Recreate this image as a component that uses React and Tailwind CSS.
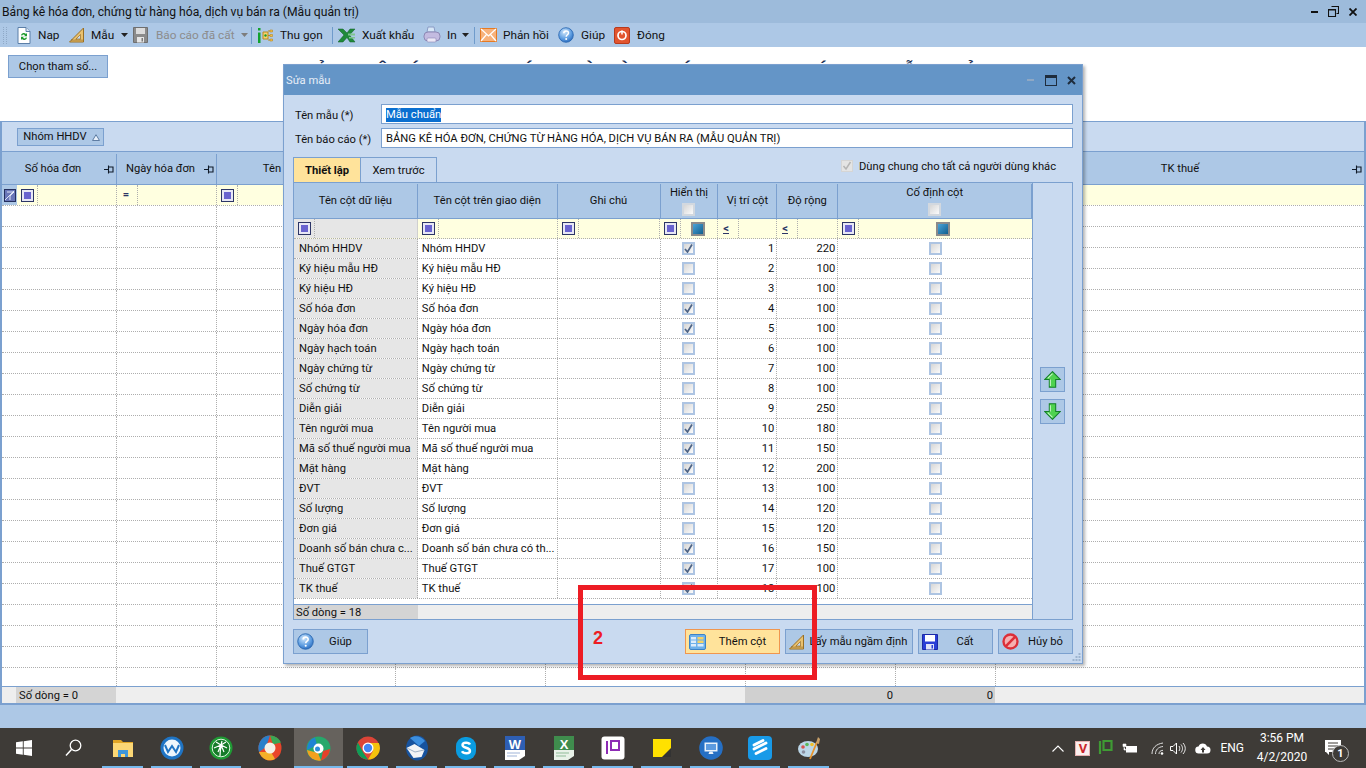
import React from "react";

const FONT = "font-['Roboto','Liberation_Sans',Arial,sans-serif]";
const BORDER = "border-[#7ba0cf]";

const IconDoc = () => (
  <svg width="14" height="17" viewBox="0 0 14 17"><path d="M1 .5h8l4 4v12H1z" fill="#fff" stroke="#5b7fa8"/><path d="M9 .5v4h4" fill="#dbe6f3" stroke="#5b7fa8"/><path d="M4 8a3 3 0 0 1 5-1l1-1v3.200H7l1-1a2 2 0 0 0-3 .6zM10 11a3 3 0 0 1-5 1l-1 1V9.800h3l-1 1a2 2 0 0 0 3-.6z" fill="#1e9a2e"/></svg>
);
const IconRuler = ({ s = 16 }) => (
  <svg width={s} height={s} viewBox="0 0 16 16"><path d="M14.500 1v14H.5z" fill="#e9c16f" stroke="#9a6f22"/><path d="M11.500 7.500v4.500H7z" fill="#c9daf0" stroke="#9a6f22" strokeWidth=".7"/><path d="M3 14v-2M5 14v-1.500M7 14v-2M9 14v-1.500M11 14v-2M13 14v-1.500" stroke="#7b5512" strokeWidth=".7"/></svg>
);
const IconFloppyGray = () => (
  <svg width="15" height="16" viewBox="0 0 15 16"><path d="M.5.5h14v15H.5z" fill="#8b8b8b" stroke="#6f6f6f"/><path d="M3 1h9v6H3z" fill="#dcdcdc"/><path d="M4 10h7v5.500H4z" fill="#e6e6e6"/><path d="M8.500 11h1.500v3.500H8.500z" fill="#7a7a7a"/></svg>
);
const IconTree = () => (
  <svg width="16" height="17" viewBox="0 0 16 17"><path d="M1 1h2.500v2.500H1zM1 5.500h2.500V16H1z" fill="#12a12e"/><path d="M6 5h5v7H6z" fill="#f7d36f" stroke="#b98a1e"/><path d="M11 4h2M11 8.500h2M11 13h2" stroke="#b98a1e"/><path d="M13 3h2.500v2H13zM13 7.500h2.500v2H13zM13 12h2.500v2H13z" fill="#f3c04d" stroke="#b98a1e" strokeWidth=".6"/><circle cx="8.500" cy="8.500" r="1.200" fill="#1a9a2c"/></svg>
);
const IconExcel = () => (
  <svg width="18" height="15" viewBox="0 0 18 15"><path d="M0 1h5l4 4 3-4h5l-5.500 6L17 14h-5L9 9.500 5 14H0l6-7z" fill="#1f8a3a" stroke="#105c24" strokeWidth=".5"/><path d="M10 5.500h7v2h-7zM11 9h6v1.500h-6z" fill="#7fc58f"/></svg>
);
const IconPrinter = () => (
  <svg width="18" height="18" viewBox="0 0 18 18"><path d="M5 1h6l1 5H4z" fill="#d7e7f7" stroke="#8b9cc5"/><rect x="1" y="6" width="16" height="9" rx="4" fill="#c3bbe0" stroke="#8d88b5"/><rect x="4" y="12" width="9" height="4" rx="1" fill="#ece8f6" stroke="#8b84b5" strokeWidth=".6"/></svg>
);
const IconMail = () => (
  <svg width="17" height="14" viewBox="0 0 17 14"><path d="M.5.5h16v13H.5z" fill="#f7b27c" stroke="#e67a22"/><path d="M1 1l7.500 7L16 1M1 13l5.500-6.500M16 13l-5.500-6.500" fill="none" stroke="#fff" strokeWidth="1.200"/></svg>
);
const IconHelp = ({ s = 16 }) => (
  <svg width={s} height={s} viewBox="0 0 16 16"><defs><radialGradient id="hp" cx=".4" cy=".3" r=".8"><stop offset="0" stopColor="#cfe6fb"/><stop offset=".6" stopColor="#5b9be0"/><stop offset="1" stopColor="#1f5fb5"/></radialGradient></defs><circle cx="8" cy="8" r="7.300" fill="url(#hp)" stroke="#2563ae" strokeWidth=".8"/><path d="M5.800 6.200c0-3 4.700-3 4.700-.2 0 1.800-2.300 1.700-2.300 3.700" fill="none" stroke="#fff" strokeWidth="1.500"/><circle cx="8.200" cy="12" r="1" fill="#fff"/></svg>
);
const IconPower = () => (
  <svg width="16" height="17" viewBox="0 0 16 17"><rect x=".5" y=".5" width="15" height="16" rx="1.500" fill="#e2552f" stroke="#b73a1d"/><circle cx="8" cy="8.500" r="4" fill="none" stroke="#fff" strokeWidth="1.700"/><path d="M8 3.500v4" stroke="#fff" strokeWidth="1.500"/></svg>
);
const IconColumns = () => (
  <svg width="17" height="16" viewBox="0 0 17 16"><rect x=".5" y=".5" width="16" height="15" rx="1.500" fill="#6db0ea" stroke="#3d83c6"/><path d="M2 3h5v2.500H2zM2 6.500h5V9H2zM2 10h5v2.500H2zM8.500 10h6v2.500h-6z" fill="#dcecfa"/><path d="M8.500 3h6v2.500h-6z" fill="#f5d266"/><path d="M8.500 6.500h6V9h-6z" fill="#f5d266"/></svg>
);
const IconSave = () => (
  <svg width="16" height="16" viewBox="0 0 16 16"><path d="M.5.5h15v15H.5z" fill="#2a3fd6" stroke="#1c2aa6"/><path d="M3 1h10v6.500H3z" fill="#fff"/><path d="M4 10h8v5.500H4z" fill="#dfe3f7"/><path d="M9.500 11h1.500v3.500H9.500z" fill="#2a3fd6"/></svg>
);
const IconCancel = () => (
  <svg width="17" height="17" viewBox="0 0 16 16"><circle cx="8" cy="8" r="6.600" fill="#f6b0b0" stroke="#dc2f38" strokeWidth="2.200"/><path d="M3.500 12.500l9-9" stroke="#dc2f38" strokeWidth="2.400"/></svg>
);
const Arrow = ({ down }) => (
  <svg width="17" height="17" viewBox="0 0 16 16" style={{ transform: down ? "scaleY(-1)" : undefined }}><path d="M8 .6L15.200 8H11v7.300H5V8H.8z" fill="#4fd24f" stroke="#14802a"/><path d="M8 2.500L3.500 7M6 8v6" fill="none" stroke="#c6f5c6"/></svg>
);
const Pin = () => (
  <svg width="10" height="9" viewBox="0 0 10 9"><path d="M0 4.500h4M4.500 .5v8M4.500 2h4.500v5H4.500" fill="none" stroke="#101a28" strokeWidth="1.100"/></svg>
);
const Caret = ({ c = "#222" }) => (
  <svg width="7" height="4" viewBox="0 0 7 4"><path d="M0 0h7L3.500 4z" fill={c} /></svg>
);

const OpBox = () => (
  <span className="inline-flex h-[13px] w-[13px] shrink-0 items-center justify-center border border-[#2c3566] bg-[#e8e8f5]">
    <span className="h-[7px] w-[7px] bg-[#6a64cf]" />
  </span>
);
const FilterCheck = () => (
  <span className="inline-block h-[14px] w-[14px] border-2 border-[#8b8b8b] bg-gradient-to-br from-[#4aa4d8] to-[#0f5f8f]" />
);
const Check = ({ on, head }) => (
  <span className={`inline-flex h-[13px] w-[13px] items-center justify-center border-2 ${head ? "border-[#d2d8df]" : "border-[#adc4e2]"} bg-gradient-to-br from-[#d6d6d6] to-[#fbfbfb]`}>
    {on && <svg width="9" height="9" viewBox="0 0 9 9"><path d="M1 5l2.500 3L8 .5" fill="none" stroke="#4d6385" strokeWidth="1.700"/></svg>}
  </span>
);

function Tool({ icon, label, arrow, disabled, cls = "", lab = "", gap = "ml-[8px]" }) {
  return (
    <div className={`flex items-center ${cls}`}>
      {icon}
      {label && <span className={`${gap} ${lab} whitespace-nowrap ${disabled ? "text-[#8c8c8c]" : "text-[#111]"}`}>{label}</span>}
      {arrow && <span className="ml-[6px] flex"><Caret c={disabled ? "#7d7d7d" : "#222"} /></span>}
    </div>
  );
}
const Sep = ({ cls }) => <span className={`h-[17px] w-px bg-[#6f9bcb] ${cls}`} />;

const MAIN = [
  ["Số hóa đơn", "w-[115px]", true],
  ["Ngày hóa đơn", "w-[100px]", true],
  ["Tên người mua", "w-[179px]", true],
  ["", "w-[150px]", false],
  ["", "w-[200px]", false],
  ["", "w-[150px]", false],
  ["", "w-[100px]", false],
];

const cols = ["w-[124px]", "w-[140px]", "w-[103px]", "w-[58px]", "w-[59px]", "w-[61px]", "w-[194px]"];
const rows = [
  ["Nhóm HHDV", "Nhóm HHDV", 1, 1, 220],
  ["Ký hiệu mẫu HĐ", "Ký hiệu mẫu HĐ", 0, 2, 100],
  ["Ký hiệu HĐ", "Ký hiệu HĐ", 0, 3, 100],
  ["Số hóa đơn", "Số hóa đơn", 1, 4, 100],
  ["Ngày hóa đơn", "Ngày hóa đơn", 1, 5, 100],
  ["Ngày hạch toán", "Ngày hạch toán", 0, 6, 100],
  ["Ngày chứng từ", "Ngày chứng từ", 0, 7, 100],
  ["Số chứng từ", "Số chứng từ", 0, 8, 100],
  ["Diễn giải", "Diễn giải", 0, 9, 250],
  ["Tên người mua", "Tên người mua", 1, 10, 180],
  ["Mã số thuế người mua", "Mã số thuế người mua", 1, 11, 150],
  ["Mặt hàng", "Mặt hàng", 1, 12, 200],
  ["ĐVT", "ĐVT", 0, 13, 100],
  ["Số lượng", "Số lượng", 0, 14, 120],
  ["Đơn giá", "Đơn giá", 0, 15, 120],
  ["Doanh số bán chưa c...", "Doanh số bán chưa có th...", 1, 16, 150],
  ["Thuế GTGT", "Thuế GTGT", 1, 17, 100],
  ["TK thuế", "TK thuế", 1, 18, 100],
];

const DOT = "border-dotted border-[#aeaeae]";

function MainRow({ children }) {
  return <div className={`flex h-[21px] shrink-0 border-b ${DOT}`}>{children}</div>;
}
const OpCell = ({ children }) => (
  <div className={`flex h-full w-[21px] shrink-0 items-center border-r ${DOT} pl-[4px]`}>{children}</div>
);

function DlgButton({ icon, label, cls, hot, textCls = "flex-1 text-center" }) {
  return (
    <div className={`flex h-[25px] items-center border pl-[3px] ${hot ? "border-[#f0964e] bg-[#ffe39b]" : `${BORDER} bg-[#adc8e6]`} ${cls}`}>
      {icon}
      <span className={`whitespace-nowrap text-[#111] ${textCls}`}>{label}</span>
    </div>
  );
}

const Windows = () => (
  <svg width="16" height="16" viewBox="0 0 16 16"><path d="M0 2.300l6.800-1v6.300H0zM7.700 1.200L16 0v7.600H7.700zM0 8.400h6.800v6.300L0 13.700zM7.700 8.400H16V16l-8.300-1.200z" fill="#fff"/></svg>
);
const Search = () => (
  <svg width="17" height="18" viewBox="0 0 17 18"><circle cx="10.500" cy="6.500" r="5.300" fill="none" stroke="#fff" strokeWidth="1.300"/><path d="M6.500 10.500L1 16.500" stroke="#fff" strokeWidth="1.500"/></svg>
);
const Folder = () => (
  <svg width="22" height="22" viewBox="0 0 22 22"><path d="M1 3h8l2 2h10v3H1z" fill="#e0a526"/><path d="M1 6h20v14H1z" fill="#fbd775"/><path d="M6 13h10v7h-3v-3H9v3H6z" fill="#3d97dc"/></svg>
);
const Mobi = () => (
  <svg width="24" height="24" viewBox="0 0 24 24"><circle cx="12" cy="12" r="11.500" fill="#1f74c4"/><circle cx="12" cy="12" r="8.500" fill="#eef6fc"/><path d="M5 9l3 7 4-6 4 6 3-7" fill="none" stroke="#1f74c4" strokeWidth="2"/></svg>
);
const Palm = () => (
  <svg width="24" height="24" viewBox="0 0 24 24"><circle cx="12" cy="12" r="11.500" fill="#1f9a34"/><circle cx="12" cy="12" r="8.800" fill="#157a28" stroke="#dff5e0"/><path d="M11 20c0-5 .5-8 1.500-11M12 9L5 12M12 9l-5-3M12 9l1-4M12 9l5-3M12 9l6 3M12 9l3 7M12 9l-3 7" stroke="#fff" strokeWidth="1.200" fill="none"/></svg>
);
const Orb = () => (
  <svg width="24" height="26" viewBox="0 0 24 26"><ellipse cx="12" cy="13" rx="11.500" ry="12.500" fill="#e8452a"/><path d="M12 .5A11.500 12.500 0 0 0 1 17l7-5z" fill="#2a7fc9"/><path d="M1 17a11.500 12.500 0 0 0 16 7l-4-7z" fill="#f4b02a"/><path d="M12 .5c5 0 9 3 11 7l-8 2z" fill="#3aa655"/><circle cx="12" cy="13" r="5.500" fill="#f4f1e8"/></svg>
);
const Coc = () => (
  <svg width="25" height="25" viewBox="0 0 25 25"><circle cx="12.500" cy="12.500" r="12" fill="#27a86b"/><path d="M1 14A12 12 0 0 0 15 24.500L12 17z" fill="#f2a11f"/><path d="M1 14C1 8 4 3 9 1.500L11 9z" fill="#1e84d4"/><path d="M15 24.500C20 23 24 18 24 13l-7 2z" fill="#e5402a"/><circle cx="12.500" cy="12.500" r="5" fill="#fff"/><circle cx="11.500" cy="13" r="2.500" fill="#2c8edb"/></svg>
);
const Chrome = () => (
  <svg width="24" height="24" viewBox="0 0 24 24"><circle cx="12" cy="12" r="11.500" fill="#db4437"/><path d="M1.800 6.500L7.500 17l4.500 6.500A11.500 11.500 0 0 1 1.800 6.500z" fill="#0f9d58"/><path d="M12 7h10.800A11.500 11.500 0 0 1 12 23.500L17 15z" fill="#f4c20d"/><circle cx="12" cy="12" r="5.500" fill="#fff"/><circle cx="12" cy="12" r="4.200" fill="#4285f4"/></svg>
);
const Thunder = () => (
  <svg width="24" height="26" viewBox="0 0 24 26"><ellipse cx="12" cy="13" rx="11" ry="12.500" fill="#17539e"/><path d="M5 3c5-3 11-2 15 3l-6 5z" fill="#3c8fdf"/><path d="M1.500 13l8-4 10 6-3 7-8 1z" fill="#f2f4f6"/><path d="M2 13l8 4 9-2" fill="none" stroke="#9fb2c6"/></svg>
);
const Skype = () => (
  <svg width="22" height="25" viewBox="0 0 22 25"><rect x="1" y="1" width="20" height="23" rx="9" fill="#0a9ce0"/><path d="M15 8.500c-1-2.500-7.500-2.500-7.500.5 0 3.500 7.500 2 7.500 6 0 3-6.500 3-8 .2" fill="none" stroke="#fff" strokeWidth="2.400"/></svg>
);
const Word = () => (
  <svg width="22" height="26" viewBox="0 0 22 26"><path d="M1 1h20v20l-6 4H1z" fill="#fff"/><path d="M1 1h20v14H1z" fill="#2e5fb4"/><text x="11" y="14" textAnchor="middle" fontSize="13" fontWeight="700" fill="#fff" fontFamily="Liberation Sans">W</text><path d="M3 18h13M3 21h10" stroke="#9fb4d8"/></svg>
);
const Excel = () => (
  <svg width="22" height="26" viewBox="0 0 22 26"><path d="M1 1h20v20l-6 4H1z" fill="#e8f1e8"/><path d="M1 1h20v14H1z" fill="#3f8c4d"/><text x="11" y="14" textAnchor="middle" fontSize="13" fontWeight="700" fill="#fff" fontFamily="Liberation Sans">X</text><path d="M3 18h13M3 21h10" stroke="#8fbb98"/></svg>
);
const IP = () => (
  <svg width="24" height="24" viewBox="0 0 24 24"><rect x=".5" y=".5" width="23" height="23" rx="3" fill="#fff"/><path d="M6 5v13M10 5v9h8V5z" fill="none" stroke="#8d2bb5" strokeWidth="2"/></svg>
);
const Sticky = () => (
  <svg width="18" height="18" viewBox="0 0 18 18"><path d="M0 0h18v18H0z" fill="#ffe100"/><path d="M18 9v9H9z" fill="#333"/></svg>
);
const Monitor = () => (
  <svg width="24" height="24" viewBox="0 0 24 24"><circle cx="12" cy="12" r="11.800" fill="#256fc4"/><path d="M5.500 6.500h13v9h-13z" fill="#eaf2fb"/><path d="M7 8h10v6H7z" fill="#5d9be0"/><path d="M9.500 18h5l-1-2.500h-3z" fill="#eaf2fb"/></svg>
);
const Tile = () => (
  <svg width="24" height="24" viewBox="0 0 24 24"><rect width="24" height="24" rx="4" fill="#189ae8"/><path d="M6 9l9-4.500M6 13l12-6M8 17.500l10-5" stroke="#fff" strokeWidth="2.800" strokeLinecap="round"/></svg>
);
const Palette = () => (
  <svg width="24" height="24" viewBox="0 0 24 24"><ellipse cx="11" cy="13" rx="10" ry="8" fill="#bcd7e8"/><circle cx="6" cy="11" r="1.800" fill="#d9534f"/><circle cx="10" cy="8.500" r="1.800" fill="#5cb85c"/><circle cx="15" cy="8.500" r="1.800" fill="#f0c02a"/><circle cx="6.500" cy="16" r="1.800" fill="#8a8fa0"/><path d="M13 23L20 6" stroke="#e8932a" strokeWidth="1.800"/><path d="M19 7l2-6 2 2-1 5z" fill="#c8a068"/></svg>
);

const apps = [
  [Folder, 1], [Mobi, 1], [Palm, 1], [Orb, 0], [Coc, 2], [Chrome, 1], [Thunder, 1], [Skype, 1], [Word, 1], [Excel, 1], [IP, 1], [Sticky, 1], [Monitor, 1], [Tile, 1], [Palette, 1],
];

export default function App() {
  return (
    <div className={`relative flex h-[768px] w-[1366px] flex-col overflow-hidden bg-white text-[11.2px] leading-[14px] text-[#111] ${FONT}`}>
      {/* window title */}
      <div className="flex h-[23px] shrink-0 items-center bg-[#9dbbdb] pl-[2px] pr-[4px]">
        <span className="flex-1 text-[12.15px] text-[#111]">Bảng kê hóa đơn, chứng từ hàng hóa, dịch vụ bán ra (Mẫu quản trị)</span>
        <div className="mr-[5px] flex items-center">
          <span className="mr-[10px] h-[2px] w-[7px] bg-[#111]" />
          <svg width="11" height="11" viewBox="0 0 11 11" className="mr-[10px]"><path d="M3.500.5h7v7h-2M.5 3.500h7v7h-7zM.5 4h7" fill="none" stroke="#111" strokeWidth="1.100"/></svg>
          <svg width="8" height="8" viewBox="0 0 8 8"><path d="M.5.5l7 7M7.500.5l-7 7" stroke="#111" strokeWidth="1.800"/></svg>
        </div>
      </div>
      {/* toolbar */}
      <div className="flex h-[24px] shrink-0 items-center bg-[#adc8e6] text-[11.8px]">
        <span className="ml-[3px] h-[17px] w-[4px] border-x border-dotted border-[#8fa9c7]" />
        <Tool cls="ml-[10px]" icon={<IconDoc />} label="Nap" gap="ml-[7px]" lab="w-[22px]" />
        <Tool cls="ml-[9px]" icon={<IconRuler />} label="Mẫu" arrow gap="ml-[6px]" lab="w-[24px]" />
        <Tool cls="ml-[5px]" icon={<IconFloppyGray />} label="Báo cáo đã cất" arrow disabled lab="w-[79px]" />
        <Sep cls="ml-[3px]" />
        <Tool cls="ml-[5px]" icon={<IconTree />} label="Thu gọn" gap="ml-[7px]" lab="w-[44px]" />
        <Sep cls="ml-[8px]" />
        <Tool cls="ml-[5px]" icon={<IconExcel />} label="Xuất khẩu" gap="ml-[6px]" lab="w-[52px]" />
        <Tool cls="ml-[9px]" icon={<IconPrinter />} label="In" arrow gap="ml-[6px]" lab="w-[9px]" />
        <Sep cls="ml-[5px]" />
        <Tool cls="ml-[5px]" icon={<IconMail />} label="Phản hồi" gap="ml-[6px]" lab="w-[47px]" />
        <Tool cls="ml-[8px]" icon={<IconHelp />} label="Giúp" gap="ml-[7px]" lab="w-[25px]" />
        <Tool cls="ml-[8px]" icon={<IconPower />} label="Đóng" gap="ml-[7px]" />
      </div>
      {/* parameter area */}
      <div className="flex h-[74px] shrink-0 items-start bg-white">
        <div className={`ml-[8px] mt-[8px] flex h-[23px] w-[100px] items-center justify-center border ${BORDER} bg-[#adc8e6]`}>Chọn tham số...</div>
        <div className="ml-[193px] mt-[13px] whitespace-nowrap font-['Liberation_Sans',Arial,sans-serif] text-[19px] font-bold leading-[22px] text-[#1b2f55]">BẢNG KÊ HÓA ĐƠN, CHỨNG TỪ HÀNG HÓA, DỊCH VỤ BÁN RA (MẪU QUẢN TRỊ)</div>
      </div>
      {/* main grid */}
      <div className={`flex flex-1 flex-col border-x-2 border-t ${BORDER} min-h-0`}>
        <div className={`flex h-[30px] shrink-0 items-center border-b ${BORDER} bg-[#c9daf0] pl-[15px]`}>
          <div className={`flex h-[18px] w-[87px] items-center justify-center gap-[5px] border ${BORDER} bg-[#adc8e6] pl-[2px] pt-[1px]`}>
            Nhóm HHDV
            <svg width="8" height="7" viewBox="0 0 8 7"><path d="M4 .7L7.500 6.500H.5z" fill="#e9f1fb" stroke="#5f7da3"/></svg>
          </div>
        </div>
        <div className={`flex h-[33px] shrink-0 border-b ${BORDER} bg-[#adc8e6] pt-[2px]`}>
          {MAIN.map(([t, w, pin], i) => (
            <div key={i} className={`relative flex items-center justify-center border-r ${BORDER} ${w}`}>
              <span className={pin ? "pr-[12px]" : ""}>{t}</span>
              {pin && <span className="absolute right-[2px] top-[11px] flex"><Pin /></span>}
            </div>
          ))}
          <div className="relative flex flex-1 items-center justify-center">
            TK thuế
            <span className="absolute right-[2px] top-[11px] flex"><Pin /></span>
          </div>
        </div>
        <div className="flex min-h-0 flex-1 flex-col overflow-hidden">
          <MainRow>
            <div className="flex w-[15px] items-center justify-center bg-[#adc8e6]">
              <svg width="12" height="13" viewBox="0 0 12 13"><rect x=".5" y=".5" width="11" height="12" fill="#6a77b8" stroke="#25305f"/><path d="M1 11L10 2M3 3h7L6 7v4" fill="none" stroke="#e9eefc" strokeWidth=".9"/></svg>
            </div>
            <div className="flex flex-1 bg-[#ffffe0]">
              <div className={`flex w-[100px] items-center border-r ${DOT}`}><OpCell><OpBox /></OpCell></div>
              <div className={`flex w-[100px] items-center border-r ${DOT}`}>
                <OpCell><span className="w-[10px] text-center font-bold leading-none text-[#2c3566]">=</span></OpCell>
              </div>
              <div className="flex w-[179px] items-center"><OpCell><OpBox /></OpCell></div>
            </div>
          </MainRow>
          {Array.from({ length: 23 }).map((_, r) => (
            <MainRow key={r}>
              {MAIN.map(([, w], i) => <div key={i} className={`border-r ${DOT} ${w}`} />)}
              <div className="flex-1" />
            </MainRow>
          ))}
        </div>
        <div className={`flex h-[19px] shrink-0 border-y-2 ${BORDER} border-t bg-[#eeeeee]`}>
          <div className="w-[14px]" />
          <div className="flex w-[100px] items-center bg-[#d4d4d4] pl-[3px] pt-[1px]">Số dòng = 0</div>
          <div className="w-[629px]" />
          <div className="flex w-[150px] items-center justify-end bg-[#d0d0d0] pr-[2px] pt-[1px]">0</div>
          <div className="flex w-[100px] items-center justify-end bg-[#d0d0d0] pr-[2px] pt-[1px]">0</div>
        </div>
      </div>
      <div className="h-[23px] shrink-0 bg-[#adc8e6]" />
      {/* taskbar */}
      <div className="flex h-[40px] shrink-0 items-stretch bg-[#3e3b37] text-white">
        <div className="flex w-[48px] items-center justify-center"><Windows /></div>
        <div className="flex w-[50px] items-center justify-center"><Search /></div>
        {apps.map(([Ico, st], i) => (
          <div key={i} className={`relative flex w-[49px] items-center justify-center ${st === 2 ? "bg-[#66625d]" : ""}`}>
            <Ico />
            {st > 0 && <span className={`absolute bottom-0 h-[2px] bg-[#76b9ed] ${st === 2 ? "inset-x-0" : "inset-x-[4px]"}`} />}
          </div>
        ))}
        <div className="flex flex-1 items-center justify-end pr-[21px]">
          <svg width="12" height="7" viewBox="0 0 12 7" className="mr-[11px]"><path d="M.5 6.500L6 1l5.500 5.500" fill="none" stroke="#fff" strokeWidth="1.100"/></svg>
          <span className="mr-[8px] flex h-[15px] w-[15px] items-center justify-center border border-[#e6b0b0] bg-[#fbeeee] text-[13px] font-bold leading-none text-[#c9262c]">V</span>
          <svg width="15" height="16" viewBox="0 0 15 16" className="mr-[9px]"><path d="M2 1v13M5.500 1v9h8V1z" fill="none" stroke="#3f9a34" strokeWidth="2.200"/></svg>
          <svg width="16" height="10" viewBox="0 0 16 10" className="mr-[13px]"><path d="M4 3h11v6.500H4z" fill="#fff"/><path d="M1 1h3v2.500H1zM2 4v3h2" fill="#fff" stroke="#fff" strokeWidth=".6"/></svg>
          <svg width="13" height="13" viewBox="0 0 13 13" className="mr-[6px]"><path d="M1 12C1 6 5 2 12 1M4.500 12C4.500 8 7 5 12 4.500M8 12c0-2 1-3.500 4-3.700" fill="none" stroke="#ddd" strokeWidth="1"/><circle cx="11" cy="11.500" r="1.300" fill="#fff"/></svg>
          <svg width="16" height="13" viewBox="0 0 16 13" className="mr-[9px]"><path d="M.5 4.500h2.500l3.500-3.500v11L3 8.500H.5z" fill="none" stroke="#fff"/><path d="M9 4c1 1.500 1 3.500 0 5M11 2.500c2 2.500 2 5.500 0 8M13 1c3 3.500 3 7.500 0 11" fill="none" stroke="#fff" strokeWidth=".9"/></svg>
          <svg width="16" height="11" viewBox="0 0 16 11" className="mr-[9px]"><path d="M4 10.500a3.500 3.500 0 0 1-.5-7A4.500 4.500 0 0 1 12 3.500a3.500 3.500 0 0 1 0 7z" fill="#fff"/><path d="M8 4l-2.500 3h1.500v2.500h2V7h1.500z" fill="#3e3b37"/></svg>
          <span className="mr-[14px] text-[12px] text-white">ENG</span>
          <div className="mr-[19px] flex w-[48px] flex-col items-center text-[12px] leading-[19px] text-white">
            <span className="whitespace-nowrap">3:56 PM</span>
            <span className="whitespace-nowrap">4/2/2020</span>
          </div>
          <div className="relative mr-[4px] h-[16px] w-[16px]">
            <svg width="16" height="15" viewBox="0 0 16 15"><path d="M0 0h16v12H4v3l-3-3H0z" fill="#fff"/><path d="M3 3h10M3 6h10M3 9h10" stroke="#3e3b37"/></svg>
            <span className="absolute left-[7px] top-[5px] flex h-[17px] w-[17px] items-center justify-center rounded-full border border-[#bbb] bg-[#3e3b37] text-[11px] font-bold text-white">1</span>
          </div>
        </div>
      </div>

      {/* dialog window */}
      <div className={`absolute left-[283px] top-[64px] flex h-[600px] w-[800px] flex-col border ${BORDER} bg-[#c9daf0] shadow-[2px_2px_3px_rgba(0,0,0,0.3)]`}>
        <div className="flex h-[30px] shrink-0 items-center bg-[#6495c7] pl-[2px] pr-[6px]">
          <span className="flex-1 pt-[1px] text-[#e7eef7]">Sửa mẫu</span>
          <span className="mr-[11px] h-[2px] w-[7px] bg-[#8fa8c4]" />
          <span className="mr-[10px] h-[11px] w-[12px] border border-t-[3px] border-[#1e2c3d]" />
          <svg width="9" height="9" viewBox="0 0 9 9"><path d="M1 1l7 7M8 1L1 8" stroke="#1e2c3d" strokeWidth="2"/></svg>
        </div>
        <div className="flex flex-1 flex-col px-[9px] pt-[9px]">
          <div className="flex h-[20px] items-center">
            <span className="ml-[2px] w-[86px] pt-[4px]">Tên mẫu (*)</span>
            <div className={`flex h-[20px] flex-1 items-center border ${BORDER} bg-white pl-[4px] pt-[2px]`}><span className="bg-[#0a6fd0] text-white">Mẫu chuẩn</span></div>
          </div>
          <div className="mt-[4px] flex h-[20px] items-center">
            <span className="ml-[2px] w-[86px] pt-[3px]">Tên báo cáo (*)</span>
            <div className={`flex h-[20px] flex-1 items-center border ${BORDER} bg-white pl-[4px] pt-[2px]`}>BẢNG KÊ HÓA ĐƠN, CHỨNG TỪ HÀNG HÓA, DỊCH VỤ BÁN RA (MẪU QUẢN TRỊ)</div>
          </div>
          <div className="mt-[9px] flex h-[25px] items-end">
            <div className={`flex h-[25px] w-[68px] items-center justify-center border-x border-t ${BORDER} bg-[#ffe39b] pt-[1px] font-bold`}>Thiết lập</div>
            <div className={`flex h-[25px] w-[76px] items-center justify-center border-r border-t ${BORDER} pt-[1px]`}>Xem trước</div>
            <div className="flex h-[25px] flex-1 items-start justify-end pr-[17px] pt-[3px]">
              <span className="mr-[6px] flex h-[12px] w-[12px] items-center justify-center border border-[#d5d5d5] bg-[#e4e4e4]">
                <svg width="10" height="10" viewBox="0 0 10 10"><path d="M1.500 5l2.500 3L8.500 1" fill="none" stroke="#b5b5b5" strokeWidth="1.500"/></svg>
              </span>
              Dùng chung cho tất cả người dùng khác
            </div>
          </div>
          <div className={`flex h-[438px] border ${BORDER}`}>
            <div className="flex w-[738px] flex-col bg-white">
              <div className={`flex h-[36px] shrink-0 border-b ${BORDER} bg-[#adc8e6] pt-[1px]`}>
                {["Tên cột dữ liệu", "Tên cột trên giao diện", "Ghi chú", "Hiển thị", "Vị trí cột", "Độ rộng", "Cố định cột"].map((t, i) => (
                  <div key={t} className={`flex flex-col items-center justify-center border-r ${BORDER} ${cols[i]}`}>
                    <span>{t}</span>
                    {(i === 3 || i === 6) && <span className="mt-[3px] flex"><Check head /></span>}
                  </div>
                ))}
              </div>
              <div className={`flex h-[20px] shrink-0 border-b ${DOT} bg-[#ffffe0]`}>
                <div className={`flex items-center border-r border-[#cfcfcf] bg-[#e6e6e6] ${cols[0]}`}><OpCell><OpBox /></OpCell></div>
                <div className={`flex items-center border-r ${DOT} ${cols[1]}`}><OpCell><OpBox /></OpCell></div>
                <div className={`flex items-center border-r ${DOT} ${cols[2]}`}><OpCell><OpBox /></OpCell></div>
                <div className={`flex items-center justify-between border-r ${DOT} pr-[12px] ${cols[3]}`}><OpCell><OpBox /></OpCell><FilterCheck /></div>
                <div className={`flex items-center border-r ${DOT} ${cols[4]}`}><OpCell><span className="ml-[1px] border-b border-[#2c3566] font-bold leading-[9px] text-[#2c3566]">&lt;</span></OpCell></div>
                <div className={`flex items-center border-r ${DOT} ${cols[5]}`}><OpCell><span className="ml-[1px] border-b border-[#2c3566] font-bold leading-[9px] text-[#2c3566]">&lt;</span></OpCell></div>
                <div className={`flex items-center justify-between pr-[82px] ${cols[6]}`}><OpCell><OpBox /></OpCell><FilterCheck /></div>
              </div>
              <div className="flex-1 overflow-hidden">
                {rows.map((r) => (
                  <div key={r[0] + r[3]} className={`flex h-[20px] border-b ${DOT}`}>
                    <div className={`flex items-center whitespace-nowrap border-r ${DOT} bg-[#e6e6e6] pl-[5px] pt-[1px] ${cols[0]}`}>{r[0]}</div>
                    <div className={`flex items-center whitespace-nowrap border-r ${DOT} pl-[4px] pt-[1px] ${cols[1]}`}>{r[1]}</div>
                    <div className={`border-r ${DOT} ${cols[2]}`} />
                    <div className={`flex items-center justify-center border-r ${DOT} ${cols[3]}`}><Check on={!!r[2]} /></div>
                    <div className={`flex items-center justify-end border-r ${DOT} pr-[2px] pt-[1px] ${cols[4]}`}>{r[3]}</div>
                    <div className={`flex items-center justify-end border-r ${DOT} pr-[2px] pt-[1px] ${cols[5]}`}>{r[4]}</div>
                    <div className={`flex items-center justify-center ${cols[6]}`}><Check /></div>
                  </div>
                ))}
              </div>
              <div className={`flex h-[15px] shrink-0 border-t ${BORDER} bg-[#eeeeee]`}>
                <div className="flex w-[124px] items-center bg-[#d4d4d4] pl-[2px] pt-[1px]">Số dòng = 18</div>
              </div>
            </div>
            <div className={`flex flex-1 flex-col items-center border-l ${BORDER} pt-[184px]`}>
              <div className={`flex h-[25px] w-[25px] items-center justify-center border ${BORDER} bg-[#adc8e6]`}><Arrow /></div>
              <div className={`mt-[7px] flex h-[25px] w-[25px] items-center justify-center border ${BORDER} bg-[#adc8e6]`}><Arrow down /></div>
            </div>
          </div>
          <div className="mt-[9px] flex">
            <DlgButton cls="w-[75px]" icon={<IconHelp s={17} />} label="Giúp" />
            <DlgButton cls="ml-[317px] w-[95px]" hot icon={<IconColumns />} label="Thêm cột" />
            <DlgButton cls="ml-[5px] w-[128px]" icon={<IconRuler />} label="Lấy mẫu ngầm định" />
            <DlgButton cls="ml-[5px] w-[75px]" icon={<IconSave />} label="Cất" />
            <DlgButton cls="ml-[5px] w-[75px]" icon={<IconCancel />} label="Hủy bỏ" />
          </div>
        </div>
        <svg width="9" height="9" viewBox="0 0 9 9" className="absolute bottom-[1px] right-[1px]"><path d="M6.500 0h2v2h-2zM3.500 3h2v2h-2zM6.500 3h2v2h-2zM.5 6h2v2h-2zM3.500 6h2v2h-2zM6.500 6h2v2h-2z" fill="#9db4cf"/></svg>
      </div>

      {/* annotation */}
      <div className="pointer-events-none absolute left-[578px] top-[585px] h-[95px] w-[239px] border-[5px] border-[#ed1c24]" />
      <span className="absolute left-[593px] top-[629px] font-['Liberation_Sans',Arial,sans-serif] text-[18px] font-bold leading-[18px] text-[#ed1c24]">2</span>
    </div>
  );
}
